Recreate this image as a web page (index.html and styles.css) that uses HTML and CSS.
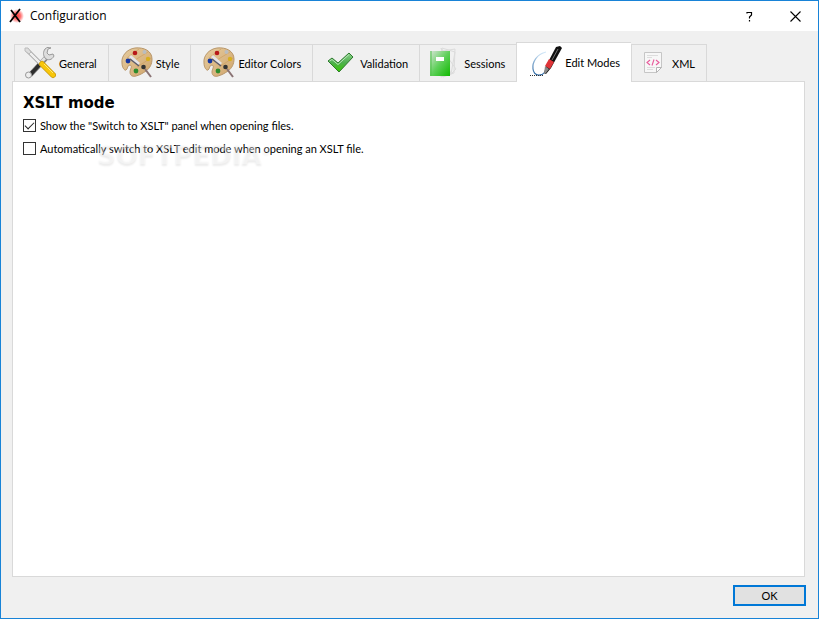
FILE: index.html
```html
<!DOCTYPE html>
<html lang="en">
<head>
    <meta charset="UTF-8">
    <meta name="viewport" content="width=device-width, initial-scale=1.0">
    <title>Configuration</title>
    <link rel="stylesheet" href="styles.css">
</head>
<body>
<!-- Shared artwork -->
<svg class="defs" aria-hidden="true">
    <defs>
        <linearGradient id="wood" x1="0" y1="0" x2="1" y2="1">
            <stop offset="0" stop-color="#e6cc9f"/>
            <stop offset="1" stop-color="#d0a56c"/>
        </linearGradient>
        <linearGradient id="check" x1="0" y1="0" x2="0" y2="1">
            <stop offset="0" stop-color="#8bd08b"/>
            <stop offset="0.5" stop-color="#4fb04f"/>
            <stop offset="1" stop-color="#38c800"/>
        </linearGradient>
        <linearGradient id="book" x1="0" y1="0" x2="1" y2="1">
            <stop offset="0" stop-color="#d8e4d8"/>
            <stop offset="0.5" stop-color="#5fd05a"/>
            <stop offset="1" stop-color="#10b900"/>
        </linearGradient>
        <linearGradient id="ink" x1="0" y1="0" x2="0" y2="1">
            <stop offset="0" stop-color="#d5eafa"/>
            <stop offset="1" stop-color="#1d5c9c"/>
        </linearGradient>
        <radialGradient id="glow">
            <stop offset="0" stop-color="#ff3c3c"/>
            <stop offset="0.5" stop-color="#ff7070"/>
            <stop offset="1" stop-color="#ffffff"/>
        </radialGradient>
        <symbol id="palette" viewBox="-3 0 35 32">
            <path d="M14 1C6 2 0 9 1 16c0 5 3 8 4 7 2-1 1-5 4-5 3 1 0 4 0 7 0 4 3 5 6 4 4-1 7-3 10-5 4-3 6-7 6-12C31 4 23 0 14 1z" fill="url(#wood)" stroke="#b8966a"/>
            <path d="M6 11L18 2M14 13L27 5M16 20l14-9" stroke="#c99a5c" stroke-width="0.6"/>
            <path d="M9 9l9 8" stroke="#e4e4e8" stroke-width="3"/>
            <path d="M9 12l9 7" stroke="#5c5c6c" stroke-width="1.500"/>
            <path d="M24 22l6 8" stroke="#8a7374" stroke-width="2"/>
            <circle cx="14" cy="6" r="2.300" fill="#b81818"/>
            <circle cx="23.500" cy="5" r="2" fill="#b9bdc0"/>
            <circle cx="27" cy="12" r="2.200" fill="#d9b020"/>
            <circle cx="7" cy="14" r="2.400" fill="#1737a0"/>
            <circle cx="22.500" cy="20" r="2.300" fill="#333"/>
            <circle cx="15" cy="24" r="2.400" fill="#2d8b2d"/>
        </symbol>
    </defs>
</svg>

<div class="window">
    <header class="titlebar">
        <svg class="app-icon" viewBox="0 0 16 16" aria-hidden="true">
            <circle cx="9" cy="8" r="7" fill="url(#glow)"/>
            <path d="M3 2l9 12M12 1L2 14" stroke="#000" stroke-width="1.800" fill="none"/>
        </svg>
        <h1 class="title">Configuration</h1>
        <button type="button" class="title-button" aria-label="Help">
            <svg viewBox="0 0 11 11"><path d="M3 2.500V1.500h4.500V4L5.500 6v1.500M5.500 9v1.500" stroke="#000" stroke-width="1.200" fill="none"/></svg>
        </button>
        <button type="button" class="title-button" aria-label="Close">
            <svg viewBox="0 0 11 11"><path d="M.5.5l10 10M10.500.5l-10 10" stroke="#000" stroke-width="1.100" fill="none"/></svg>
        </button>
    </header>

    <main class="content">
        <div class="tabs" role="tablist">
            <button type="button" class="tab" role="tab">
                <svg class="icon-tools" viewBox="0 0 32 32" aria-hidden="true">
                    <path d="M23 10L6 28" stroke="#888" stroke-width="5"/>
                    <path d="M22 10L9 24" stroke="#e2e2e2" stroke-width="3"/>
                    <path d="M16 17L6 28" stroke="#2c2c2c" stroke-width="4"/>
                    <circle cx="4.500" cy="28" r="3" fill="#eee" stroke="#999"/>
                    <path d="M21 2c-2 3-2 6 0 9 3 3 7 2 9-2l-1-2-4 1-2-2 1-4 3-1c-2-1-4-1-6 1z" fill="#ddd" stroke="#999"/>
                    <path d="M3 3l15 15" stroke="#999" stroke-width="4"/>
                    <path d="M3 3l15 15" stroke="#eee" stroke-width="2.500"/>
                    <path d="M1 1l3 0 3 4-2 2-4-3z" fill="#ddd" stroke="#bbb"/>
                    <path d="M18 17l11 11" stroke="#c79a10" stroke-width="6" stroke-linecap="round"/>
                    <path d="M18 17l11 11" stroke="#f8c60a" stroke-width="4.500" stroke-linecap="round"/>
                    <path d="M20 17l9 9" stroke="#ffe977" stroke-width="1"/>
                </svg>
                General
            </button>
            <button type="button" class="tab" role="tab">
                <svg class="icon" aria-hidden="true"><use href="#palette"/></svg>
                Style
            </button>
            <button type="button" class="tab" role="tab">
                <svg class="icon" aria-hidden="true"><use href="#palette"/></svg>
                Editor Colors
            </button>
            <button type="button" class="tab" role="tab">
                <svg class="icon" viewBox="-3 0 35 32" aria-hidden="true">
                    <path d="M3 14l4-3 6 5L24 6l4 4-14 15z" fill="url(#check)" stroke="#2d7a2d" stroke-linejoin="round"/>
                    <path d="M4.500 14L7 12.500l6 5L24 7.500" stroke="#b9e6b9" fill="none"/>
                </svg>
                Validation
            </button>
            <button type="button" class="tab" role="tab">
                <svg class="icon-book" viewBox="-1 0 32 32" aria-hidden="true">
                    <path d="M12 1l13 4-4 22-10 3zM13 4l12-2-1 24-11 4zM11 1l10 26 5-5z" fill="#f0f0f0" stroke="#dcdcdc"/>
                    <path d="M0 4h20v25H0z" fill="url(#book)"/>
                    <path d="M1 4v25" stroke="#4fc14a" stroke-opacity="0.5" stroke-width="2"/>
                    <path d="M6 10h8v4H6z" fill="#fff"/>
                </svg>
                Sessions
            </button>
            <button type="button" class="tab active" role="tab" aria-selected="true">
                <svg class="icon-pen" viewBox="-3 0 36 32" aria-hidden="true">
                    <path d="M17 6C8 8 3 16 4 23c1 7 8 8 12 3" stroke="url(#ink)" stroke-width="1.200" fill="none"/>
                    <path d="M1 29.500h13" stroke="#333" stroke-dasharray="1 1" fill="none"/>
                    <path d="M27 1l4-1 2 2-11 20-5 6-2-1 2-7z" fill="#101010"/>
                    <path d="M20 13l5 3-4 7-5-3z" fill="#df3438"/>
                    <path d="M16 20l4 3-3 4-2 1z" fill="#888"/>
                    <path d="M29 3l-6 11" stroke="#777" stroke-width="1"/>
                </svg>
                Edit Modes
            </button>
            <button type="button" class="tab" role="tab">
                <svg class="icon-xml" viewBox="-3 0 28 32" aria-hidden="true">
                    <path d="M.5 5.500h17v15l-5 5H.5z" fill="#f7f7f7" stroke="#c6c6c6"/>
                    <path d="M12.500 25.500v-5h5z" fill="#fff" stroke="#b5b5b5"/>
                    <path d="M3 8.500h11M3 10.500h5M3 20.500h8M3 22.500h6" stroke="#ddd"/>
                    <path d="M6 13l-3 2.500L6 18M12 13l3 2.500-3 2.500M10 12.500l-2 6" stroke="#e85a9b" stroke-width="1.100" fill="none"/>
                </svg>
                XML
            </button>
        </div>

        <section class="panel" role="tabpanel">
            <h2>XSLT mode</h2>
            <label class="option">
                <input type="checkbox" checked>
                Show the "Switch to XSLT" panel when opening files.
            </label>
            <label class="option marked">
                <input type="checkbox">
                Automatically switch to XSLT edit mode when opening an XSLT file.
                <span class="watermark" aria-hidden="true">SOFTPEDIA<sup>®</sup></span>
            </label>
        </section>
    </main>

    <footer class="footer">
        <button type="button" class="ok">OK</button>
    </footer>
</div>
</body>
</html>
```

FILE: styles.css
```css
* {
    box-sizing: border-box;
}
body {
    margin: 0;
    font-family: Lato, sans-serif;
    font-size: 11px;
    color: #000;
}
button {
    font: inherit;
    color: inherit;
}
.defs {
    position: absolute;
    width: 0;
    height: 0;
}
.window {
    display: flex;
    flex-direction: column;
    min-height: 100vh;
    background: #f0f0f0;
    border: 1px solid #1883d7;
}

/* Title bar */
.titlebar {
    display: flex;
    align-items: center;
    height: 30px;
    padding-left: 7px;
    background: #fff;
}
.app-icon {
    width: 16px;
    height: 16px;
    margin-right: 6px;
}
.title {
    flex: 1;
    margin: 0;
    font-family: "Open Sans", sans-serif;
    font-size: 12px;
    font-weight: normal;
    line-height: 18px;
}
.title-button {
    display: flex;
    align-items: center;
    justify-content: center;
    width: 46px;
    height: 30px;
    padding: 0;
    border: none;
    background: none;
}
.title-button svg {
    width: 11px;
    height: 11px;
}

/* Tabs */
.content {
    flex: 1;
    display: flex;
    flex-direction: column;
    padding: 11px 13px 0 11px;
}
.tabs {
    display: flex;
    align-items: flex-end;
    padding-left: 2px;
}
.tab {
    display: flex;
    align-items: center;
    gap: 3px;
    height: 37px;
    padding: 0 11px 0 9px;
    border: 1px solid #d9d9d9;
    border-bottom: none;
    border-right: none;
    background: #f0f0f0;
    white-space: nowrap;
}
.tab:last-child {
    border-right: 1px solid #d9d9d9;
}
.tab.active {
    z-index: 1;
    height: 40px;
    margin-bottom: -1px;
    padding-bottom: 1px;
    background: #fff;
}
.tab svg {
    flex: none;
    height: 32px;
}
.icon {
    width: 35px;
}
.icon-tools,
.icon-book {
    width: 32px;
}
.icon-pen {
    width: 36px;
}
.icon-xml {
    width: 28px;
}

/* Page of the selected tab */
.panel {
    flex: 1;
    padding: 10px;
    background: #fff;
    border: 1px solid #d9d9d9;
}
.panel h2 {
    margin: 0 0 3px;
    font-family: "DejaVu Sans", sans-serif;
    font-size: 15px;
    line-height: 22px;
}
.option {
    display: flex;
    align-items: center;
    gap: 4px;
    width: fit-content;
    height: 17px;
    margin-bottom: 6px;
}
.option input {
    appearance: none;
    width: 13px;
    height: 13px;
    margin: 0;
    border: 1px solid #333;
    background: #fff;
}
.option input:checked::after {
    content: "";
    display: block;
    width: 8px;
    height: 4px;
    margin: 2px 1px;
    border-left: 1px solid #222;
    border-bottom: 1px solid #222;
    transform: rotate(-45deg);
}
.marked {
    position: relative;
}
.watermark {
    position: absolute;
    left: 74px;
    top: 0;
    font-family: "DejaVu Sans", sans-serif;
    font-size: 26px;
    font-weight: bold;
    line-height: 30px;
    color: rgba(255, 255, 255, 0.4);
    text-shadow: 0 2px 2px rgba(0, 0, 0, 0.08);
    pointer-events: none;
}
.watermark sup {
    font-size: 9px;
    line-height: 0;
}

/* Buttons under the panel */
.footer {
    display: flex;
    justify-content: flex-end;
    padding: 8px 12px 12px;
}
.ok {
    width: 73px;
    height: 21px;
    padding: 0;
    border: 2px solid #0078d7;
    background: #e1e1e1;
}
```
